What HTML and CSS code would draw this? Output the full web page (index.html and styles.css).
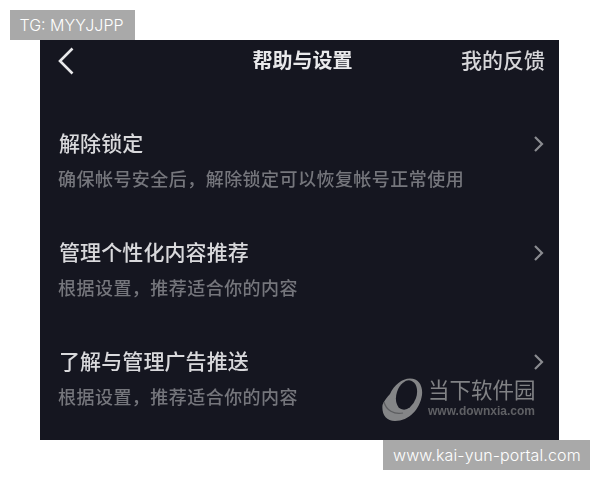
FILE: index.html
```html
<!DOCTYPE html>
<html lang="zh">
<head>
<meta charset="utf-8">
<title>帮助与设置</title>
<link rel="stylesheet" href="styles.css">
</head>
<body>
<div class="frame">
  <div class="tag tag-top">TG: MYYJJPP</div>
  <main class="panel">
    <header class="bar">
      <svg class="back" width="18" height="30" viewBox="0 0 18 30"><path d="M15.5 2.5 L3 15 L15.5 27.5" fill="none" stroke="#e8e8ea" stroke-width="2.6"/></svg>
      <h1 class="title">帮助与设置</h1>
      <span class="feedback">我的反馈</span>
    </header>
    <section class="row row-first">
      <div class="row-text">
        <div class="row-title">解除锁定</div>
        <div class="row-sub">确保帐号安全后，解除锁定可以恢复帐号正常使用</div>
      </div>
      <svg class="chev" width="12" height="18" viewBox="0 0 12 18"><path d="M2 2 L9 9 L2 16" fill="none" stroke="#8a8b90" stroke-width="2.2"/></svg>
    </section>
    <section class="row">
      <div class="row-text">
        <div class="row-title">管理个性化内容推荐</div>
        <div class="row-sub">根据设置，推荐适合你的内容</div>
      </div>
      <svg class="chev" width="12" height="18" viewBox="0 0 12 18"><path d="M2 2 L9 9 L2 16" fill="none" stroke="#8a8b90" stroke-width="2.2"/></svg>
    </section>
    <section class="row">
      <div class="row-text">
        <div class="row-title">了解与管理广告推送</div>
        <div class="row-sub">根据设置，推荐适合你的内容</div>
      </div>
      <svg class="chev" width="12" height="18" viewBox="0 0 12 18"><path d="M2 2 L9 9 L2 16" fill="none" stroke="#8a8b90" stroke-width="2.2"/></svg>
    </section>
    <div class="mark">
      <svg class="mark-logo" width="42" height="44" viewBox="0 0 42 44">
        <path d="M28 0.5 C37 0.5 41 8 40 17 C38 31 27 43 13 43 C4 43 -0.5 36 0.5 27 C2 23 5 19 8 16 C12 7 20 0.5 28 0.5 Z" fill="#848587"/>
        <path d="M2 24 C4 32 12 37 21 35" fill="none" stroke="#5c5d60" stroke-width="1.2"/>
        <ellipse class="mark-hole" cx="24.5" cy="17" rx="10" ry="15" transform="rotate(18 24.5 17)"/>
      </svg>
      <div class="mark-text">
        <div class="mark-cn">当下软件园</div>
        <div class="mark-url">www.downxia.com</div>
      </div>
    </div>
  </main>
  <div class="tag tag-bottom">www.kai-yun-portal.com</div>
</div>
</body>
</html>
```
FILE: styles.css
```css
* { box-sizing: border-box; }
html, body { margin: 0; padding: 0; background: #fff; }
body {
  width: 600px;
  height: 480px;
  overflow: hidden;
  font-family: "Noto Sans CJK SC", "Liberation Sans", sans-serif;
}
.frame {
  display: flex;
  flex-direction: column;
  padding: 10px 10px 0;
}
.tag {
  height: 30px;
  line-height: 30px;
  background: #a9a9a9;
  color: #fff;
  font-family: Inter, "Liberation Sans", sans-serif;
  font-size: 16px;
  font-weight: 300;
  white-space: nowrap;
}
.tag-top { align-self: flex-start; width: 125px; padding-left: 9.5px; }
.tag-bottom { align-self: flex-end; width: 207px; padding-left: 10px; letter-spacing: 0.12px; }
.panel {
  position: relative;
  width: 519px;
  height: 400px;
  margin-left: 30px;
  background: #151620;
  padding: 0 14px 0 18px;
}
.bar {
  display: grid;
  grid-template-columns: 1fr auto 1fr;
  align-items: center;
  height: 40px;
}
.back { justify-self: start; margin: 2px 0 0 -1px; filter: blur(0.3px); }
.title {
  margin: -1px 0 0 2px;
  font-size: 20px;
  font-weight: 700;
  color: #e9e9eb;
  line-height: 40px;
  filter: blur(0.4px);
}
.feedback {
  justify-self: end;
  margin-top: -2px;
  font-size: 21px;
  font-weight: 500;
  color: #d6d6d9;
  line-height: 40px;
  filter: blur(0.4px);
}
.row {
  display: flex;
  justify-content: space-between;
  align-items: flex-start;
  height: 109px;
}
.row-first { margin-top: 47px; }
.row-text { display: flex; flex-direction: column; gap: 8px; }
.row-title {
  font-size: 21px;
  font-weight: 500;
  line-height: 30px;
  color: #d9d9dc;
  letter-spacing: 0.1px;
  margin-left: 1px;
  filter: blur(0.4px);
}
.row-sub {
  font-size: 18px;
  font-weight: 500;
  line-height: 26px;
  letter-spacing: 0.46px;
  color: #75767c;
  filter: blur(0.5px);
}
.chev { margin: 8px 0 0 0; filter: blur(0.3px); }
.mark {
  position: absolute;
  left: 342px;
  top: 338px;
  display: flex;
  align-items: center;
  gap: 4px;
  filter: blur(0.5px);
}
.mark-hole { fill: #151620; }
.mark-text { display: flex; flex-direction: column; margin-top: -3px; }
.mark-cn {
  font-family: "Liberation Sans", "Noto Sans CJK SC", sans-serif;
  font-size: 21.5px;
  line-height: 25px;
  font-weight: 400;
  color: #818285;
}
.mark-url {
  font-family: "Liberation Sans", sans-serif;
  font-size: 12px;
  font-weight: 700;
  line-height: 15px;
  color: #5f6064;
}
```
